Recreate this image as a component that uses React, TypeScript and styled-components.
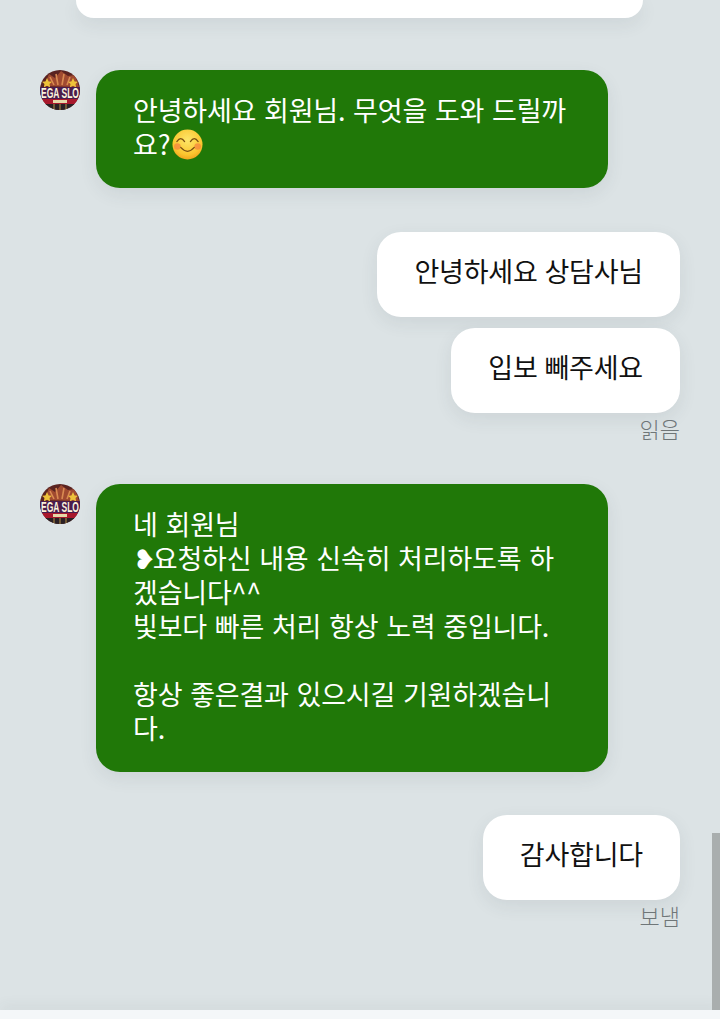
import styled, { createGlobalStyle } from 'styled-components';

const GlobalStyle = createGlobalStyle`
  html, body {
    margin: 0;
    padding: 0;
    background: #dce3e5;
  }
`;

const Screen = styled.div`
  position: relative;
  width: 720px;
  height: 1019px;
  overflow: hidden;
  display: flex;
  flex-direction: column;
  background: #dce3e5;
  font-family: 'Noto Sans CJK KR', 'Noto Sans', sans-serif;
`;

const Messages = styled.div`
  flex: 1;
  display: flex;
  flex-direction: column;
  padding: 0 40px;
`;

const TopCard = styled.div`
  height: 18px;
  margin: 0 37px 52px 36px;
  background: #fff;
  border-radius: 0 0 24px 24px;
  box-shadow: 0 6px 18px rgba(60, 70, 75, 0.09);
`;

const IncomingRow = styled.div<{ $gap: number }>`
  display: flex;
  gap: 16px;
  align-items: flex-start;
  margin-bottom: ${(p) => p.$gap}px;
`;

const Avatar = styled.svg`
  width: 40px;
  height: 40px;
  flex: none;
  border-radius: 50%;
`;

const Bubble = styled.div<{ $mine?: boolean }>`
  box-sizing: border-box;
  padding: ${(p) => (p.$mine ? '22px 37px 29px' : '23px 37px 27px')};
  border-radius: 24px;
  font-size: 27px;
  font-weight: 400;
  line-height: 34px;
  letter-spacing: -0.2px;
  word-spacing: ${(p) => (p.$mine ? '1px' : '2px')};
  white-space: pre-wrap;
  word-break: break-all;
  color: ${(p) => (p.$mine ? '#111' : '#fff')};
  background: ${(p) => (p.$mine ? '#fff' : '#207808')};
  box-shadow: 0 6px 18px rgba(60, 70, 75, 0.09);
`;

const IncomingBubble = styled(Bubble)`
  width: 512px;
`;

const HeartBullet = styled.span`
  margin-right: -3px;
`;

const OutgoingGroup = styled.div<{ $last?: boolean }>`
  display: flex;
  flex-direction: column;
  align-items: flex-end;
  gap: 11px;
  margin-bottom: ${(p) => (p.$last ? 0 : '40px')};
`;

const Receipt = styled.div`
  margin-top: -12px;
  font-size: 22px;
  font-weight: 300;
  line-height: 32px;
  color: #6f7678;
`;

const Emoji = styled.svg`
  width: 31px;
  height: 31px;
  margin: -6px 0 -6px 2px;
  vertical-align: 1px;
`;

const Composer = styled.div`
  height: 9px;
  background: #f4f7f9;
  box-shadow: 0 -4px 14px rgba(60, 70, 75, 0.07);
`;

const ScrollThumb = styled.div`
  position: absolute;
  right: 0;
  top: 833px;
  bottom: 9px;
  width: 8px;
  background: #a9aeae;
`;

const BrandAvatar = () => (
  <Avatar viewBox="0 0 40 40">
    <rect width="40" height="40" fill="#5a2320" />
    <path d="M4 16 L9 4 L15 8 L21 1 L28 6 L35 5 L39 17 Z" fill="#a04a30" />
    <path d="M10 7 L14 15 M16 4 L18 15 M24 4 L22 15 M30 7 L27 15" stroke="#d98a52" strokeWidth="1.6" />
    <path d="M7 8 l1.6 3.4 3.4 .4 -2.5 2.3 .7 3.3 -3.2 -1.7 -3.2 1.7 .7 -3.3 -2.5 -2.3 3.4 -.4 Z" fill="#eec23a" />
    <path d="M33 8 l1.6 3.4 3.4 .4 -2.5 2.3 .7 3.3 -3.2 -1.7 -3.2 1.7 .7 -3.3 -2.5 -2.3 3.4 -.4 Z" fill="#eec23a" />
    <rect y="17" width="40" height="12" fill="#4a1c4c" />
    <text
      x="1"
      y="28"
      textLength="38"
      lengthAdjust="spacingAndGlyphs"
      fontFamily="Liberation Sans"
      fontWeight="700"
      fontSize="14"
      fill="#fbf3dc"
    >
      EGA SLO
    </text>
    <rect y="29" width="40" height="5" fill="#a8182c" />
    <rect x="13" y="30" width="14" height="3" fill="#e6d8a8" />
    <rect y="34" width="40" height="6" fill="#2a2024" />
    <path d="M14 34 v6 M20 34 v6 M26 34 v6" stroke="#8a6a3a" strokeWidth="1.5" />
  </Avatar>
);

const SmileEmoji = () => (
  <Emoji viewBox="0 0 32 32">
    <defs>
      <radialGradient id="face" cx="50%" cy="35%" r="70%">
        <stop offset="0%" stopColor="#fde66a" />
        <stop offset="70%" stopColor="#fbc52e" />
        <stop offset="100%" stopColor="#ee9a18" />
      </radialGradient>
    </defs>
    <circle cx="16" cy="16" r="15.5" fill="url(#face)" />
    <circle cx="5.5" cy="18" r="3.4" fill="#f4793f" opacity="0.65" />
    <circle cx="26.5" cy="18" r="3.4" fill="#f4793f" opacity="0.65" />
    <path d="M5 13 Q9 7 13 13 M19 13 Q23 7 27 13" fill="none" stroke="#7a4e12" strokeWidth="1.3" strokeLinecap="round" />
    <path d="M9 19 Q16 27 23 19" fill="none" stroke="#7a4e12" strokeWidth="1.3" strokeLinecap="round" />
  </Emoji>
);

const App = () => (
  <Screen>
    <GlobalStyle />
    <Messages>
      <TopCard />
      <IncomingRow $gap={44}>
        <BrandAvatar />
        <IncomingBubble>
          안녕하세요 회원님. 무엇을 도와 드릴까요?
          <SmileEmoji />
        </IncomingBubble>
      </IncomingRow>
      <OutgoingGroup>
        <Bubble $mine>안녕하세요 상담사님</Bubble>
        <Bubble $mine>입보 빼주세요</Bubble>
        <Receipt>읽음</Receipt>
      </OutgoingGroup>
      <IncomingRow $gap={43}>
        <BrandAvatar />
        <IncomingBubble>
          {'네 회원님\n'}
          <HeartBullet>❥</HeartBullet>
          {'요청하신 내용 신속히 처리하도록 하겠습니다^^\n빛보다 빠른 처리 항상 노력 중입니다.\n\n항상 좋은결과 있으시길 기원하겠습니다.'}
        </IncomingBubble>
      </IncomingRow>
      <OutgoingGroup $last>
        <Bubble $mine>감사합니다</Bubble>
        <Receipt>보냄</Receipt>
      </OutgoingGroup>
    </Messages>
    <Composer />
    <ScrollThumb />
  </Screen>
);

export default App;
